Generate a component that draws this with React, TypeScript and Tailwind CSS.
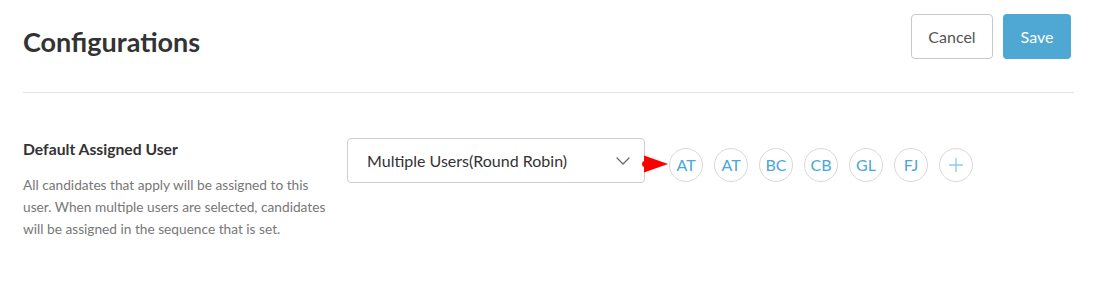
import React from 'react';
import { ChevronDown, Plus } from 'lucide-react';

const USERS = ['AT', 'AT', 'BC', 'CB', 'GL', 'FJ'];

export default function App() {
  return (
    <div className="h-[290px] w-full bg-white font-['Lato',sans-serif] text-[#333]">
      <div className="pl-[23px] pr-[22px]">
        {/* Header */}
        <div className="flex items-start justify-between pt-[14px] pb-[33px] border-b border-[#e3e3e3]">
          <h1 className="mt-[14px] text-[27px] font-bold leading-none text-[#333]">Configurations</h1>
          <div className="flex gap-[10px] mr-[3px]">
            <button className="h-[45px] w-[82px] rounded-[4px] border border-[#c8c8c8] bg-white text-[16px] text-[#555]">
              Cancel
            </button>
            <button className="h-[45px] w-[68px] rounded-[4px] bg-[#4ea8d3] text-[16px] text-white">
              Save
            </button>
          </div>
        </div>

        {/* Default Assigned User */}
        <div className="flex pt-[45px]">
          <div className="w-[324px] shrink-0">
            <h2 className="text-[15.7px] font-bold leading-[22px] text-[#333]">Default Assigned User</h2>
            <p className="mt-[14px] w-[306px] text-[13.7px] leading-[22px] text-[#777]">
              All candidates that apply will be assigned to this user. When multiple users are selected, candidates will be assigned in the sequence that is set.
            </p>
          </div>
          <div className="flex items-start">
            <div className="flex h-[45px] w-[298px] items-center justify-between rounded-[4px] border border-[#cfcfcf] pl-[19px] pr-[9px]">
              <span className="text-[16px] text-[#333]">Multiple Users(Round Robin)</span>
              <ChevronDown size={24} strokeWidth={1.2} className="text-[#666]" />
            </div>
            <svg width="26" height="18" viewBox="0 0 26 18" className="mt-[17px] -ml-[3px]">
              <circle cx="3" cy="9" r="3" fill="#ff0000" />
              <polygon points="2,0.5 26,9 2,17.5" fill="#ff0000" />
            </svg>
            <div className="flex gap-[11px] mt-[10px] ml-[1px]">
              {USERS.map((u, i) => (
                <div
                  key={i}
                  className="flex h-[34px] w-[34px] items-center justify-center rounded-full border border-[#d9d9d9] text-[16px] text-[#4aa6da]"
                >
                  {u}
                </div>
              ))}
              <div className="flex h-[34px] w-[34px] items-center justify-center rounded-full border border-[#d9d9d9] text-[#8ccbee]">
                <Plus size={22} strokeWidth={1.5} />
              </div>
            </div>
          </div>
        </div>
      </div>
    </div>
  );
}
